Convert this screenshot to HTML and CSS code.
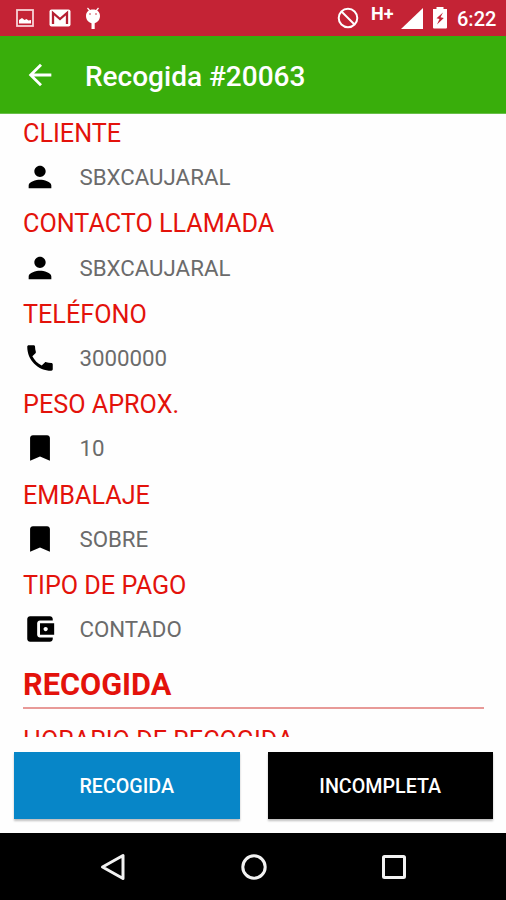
FILE: index.html
```html
<!DOCTYPE html>
<html lang="es">
<head>
<meta charset="utf-8">
<title>Recogida #20063</title>
<link rel="stylesheet" href="styles.css">
</head>
<body>
<div class="status">
  <div class="notifications">
    <svg width="18" height="18" viewBox="0 0 18 18"><rect x="1" y="1" width="16" height="16" fill="none" stroke="#f7d3d6" stroke-width="1.800"/><path d="M3 14.500V11L6 9l2.500 2 2-1 2 1.500L15 11v3.500z" fill="#fff"/></svg>
    <svg class="mail" width="22" height="18" viewBox="0 0 22 18"><rect x=".5" y=".5" width="21" height="17" rx="2" fill="#fff"/><path d="M4 15V4l7 6 7-6v11" fill="none" stroke="#b51f31" stroke-width="2.300"/></svg>
    <svg class="bug" width="16" height="23" viewBox="0 0 16 23"><path d="M2.500 1 5 4M13.500 1 11 4" stroke="#fff" stroke-width="1.200"/><path d="M8 2.500c4.300 0 7 2.500 7 6.500 0 3.500-2.500 6.500-5.300 7.200V22H6.500v-5.800C3.500 15.500 1 12.500 1 9c0-4 2.700-6.500 7-6.500z" fill="#fff"/><circle cx="5" cy="7" r=".8" fill="#c42335"/><circle cx="11" cy="7" r=".8" fill="#c42335"/></svg>
  </div>
  <div class="system">
    <svg class="blocked" width="22" height="22" viewBox="0 0 22 22" fill="none" stroke="#fff" stroke-width="2"><circle cx="11" cy="11" r="9.300"/><path d="m4.500 4.500 13 13"/></svg>
    <span class="network">H+</span>
    <svg class="signal" width="22" height="21" viewBox="0 0 22 21"><path d="M22 0v21H0z" fill="#fff"/></svg>
    <svg class="battery" width="14" height="22" viewBox="0 0 14 22"><path d="M3.500 0h7v2H14v18.500q0 1-1 1H1q-1 0-1-1V2h3.500z" fill="#fff"/><path d="M10 5.500 3.500 11.300l3 .7L4 17.500l6.800-6.500-3.300-.7z" fill="#c42335"/></svg>
    <span class="clock">6:22</span>
  </div>
</div>
<header class="appbar">
  <svg class="back" width="34" height="34" viewBox="0 0 24 24"><path d="M20 11H7.830l5.590-5.590L12 4l-8 8 8 8 1.410-1.410L7.830 13H20v-2z" fill="#fff"/></svg>
  <h1 class="title">Recogida #20063</h1>
</header>
<main class="details">
  <h2 class="label">CLIENTE</h2>
  <div class="row"><svg class="icon" viewBox="0 0 24 24"><path d="M12 12c2.210 0 4-1.790 4-4s-1.790-4-4-4-4 1.790-4 4 1.790 4 4 4zm0 2c-2.670 0-8 1.340-8 4v2h16v-2c0-2.660-5.330-4-8-4z"/></svg><span class="value">SBXCAUJARAL</span></div>
  <h2 class="label">CONTACTO LLAMADA</h2>
  <div class="row"><svg class="icon" viewBox="0 0 24 24"><path d="M12 12c2.210 0 4-1.790 4-4s-1.790-4-4-4-4 1.790-4 4 1.790 4 4 4zm0 2c-2.670 0-8 1.340-8 4v2h16v-2c0-2.660-5.330-4-8-4z"/></svg><span class="value">SBXCAUJARAL</span></div>
  <h2 class="label">TELÉFONO</h2>
  <div class="row"><svg class="icon" viewBox="0 0 24 24"><path d="M6.620 10.790c1.440 2.830 3.760 5.140 6.590 6.590l2.200-2.200c.27-.27.67-.36 1.020-.24 1.120.37 2.330.57 3.570.57.55 0 1 .45 1 1V20c0 .55-.45 1-1 1-9.390 0-17-7.610-17-17 0-.55.45-1 1-1h3.500c.55 0 1 .45 1 1 0 1.250.2 2.450.57 3.570.11.35.03.74-.25 1.020l-2.200 2.200z"/></svg><span class="value">3000000</span></div>
  <h2 class="label">PESO APROX.</h2>
  <div class="row"><svg class="icon" viewBox="0 0 24 24"><path d="M17 3H7c-1.100 0-2 .9-2 2v16l7-3 7 3V5c0-1.100-.9-2-2-2z"/></svg><span class="value">10</span></div>
  <h2 class="label">EMBALAJE</h2>
  <div class="row"><svg class="icon" viewBox="0 0 24 24"><path d="M17 3H7c-1.100 0-2 .9-2 2v16l7-3 7 3V5c0-1.100-.9-2-2-2z"/></svg><span class="value">SOBRE</span></div>
  <h2 class="label">TIPO DE PAGO</h2>
  <div class="row"><svg class="icon" viewBox="0 0 24 24"><path d="M21 18v1c0 1.100-.9 2-2 2H5c-1.110 0-2-.9-2-2V5c0-1.100.89-2 2-2h14c1.100 0 2 .9 2 2v1h-9c-1.110 0-2 .9-2 2v8c0 1.100.89 2 2 2h9zm-9-2h10V8H12v8zm4-2.500c-.83 0-1.500-.67-1.500-1.500s.67-1.500 1.500-1.500 1.500.67 1.500 1.500-.67 1.500-1.500 1.500z"/></svg><span class="value">CONTADO</span></div>
  <h2 class="section">RECOGIDA</h2>
  <h2 class="label">HORARIO DE RECOGIDA</h2>
</main>
<div class="actions">
  <button class="button primary">RECOGIDA</button>
  <button class="button dark">INCOMPLETA</button>
</div>
<nav class="navbar">
  <svg width="28" height="28" viewBox="0 0 28 28"><path d="M3.500 14 24 2.500v23z"/></svg>
  <svg width="28" height="28" viewBox="0 0 28 28"><circle cx="14" cy="14" r="11.200"/></svg>
  <svg width="28" height="28" viewBox="0 0 28 28"><rect x="3.500" y="3.500" width="21" height="21" rx="1"/></svg>
</nav>
</body>
</html>
```
FILE: styles.css
```css
* { box-sizing: border-box; }
body {
  margin: 0;
  width: 506px;
  height: 900px;
  overflow: hidden;
  display: flex;
  flex-direction: column;
  background: #fefefe;
  font-family: Roboto, "Liberation Sans", sans-serif;
}
svg { display: block; flex: none; }
h1, h2 { margin: 0; }
.status {
  flex: none;
  height: 36px;
  padding: 0 10px 0 16px;
  display: flex;
  justify-content: space-between;
  align-items: center;
  background: #c42335;
  color: #fff;
}
.notifications, .system { display: flex; align-items: center; }
.mail { margin-left: 15px; }
.bug { margin-left: 14px; }
.network {
  margin: 0 7px 9px 12px;
  width: 23px;
  font-size: 18px;
  line-height: 20px;
  font-weight: 700;
}
.battery { margin: 0 10px 0 10px; }
.clock { font-size: 20px; font-weight: 500; width: 39px; line-height: 36px; padding-top: 2px; }
.appbar {
  flex: none;
  height: 78px;
  padding-left: 23px;
  display: flex;
  align-items: center;
  background: #39ae0b;
  border-bottom: 1px solid #69bf49;
}
.title {
  margin: 4px 0 0 28px;
  color: #fff;
  font-size: 28px;
  line-height: 34px;
  font-weight: 500;
}
.details { height: 623px; padding: 5px 22px 0 23px; overflow: hidden; }
.label {
  color: #e3120b;
  font-size: 25.2px;
  line-height: 30px;
  height: 29px;
  font-weight: 400;
  white-space: nowrap;
}
.row { display: flex; align-items: center; height: 58.4px; margin-bottom: 3px; }
.icon { width: 34px; height: 34px; fill: #000; }
.value { margin-left: 22.400px; color: #6b6b6b; font-size: 22.3px; line-height: 30px; }
.section {
  height: 48px;
  margin-bottom: 17px;
  padding-top: 6px;
  border-bottom: 2px solid #e89a98;
  color: #e3120b;
  font-size: 30.7px;
  line-height: 36px;
  font-weight: 700;
}
.actions { height: 96px; flex: none; padding: 15px 13px 0 14px; display: flex; gap: 28px; }
.button {
  flex: 1;
  height: 67px;
  padding: 2px 0 0;
  border: 0;
  color: #fff;
  font: 500 19.7px/24px Roboto, "Liberation Sans", sans-serif;
  box-shadow: 0 2px 2px rgba(0, 0, 0, .25);
}
.primary { background: #0786c8; }
.dark { background: #000; }
.navbar {
  flex: none;
  height: 67px;
  padding: 0 98px 0 99px;
  display: flex;
  justify-content: space-between;
  align-items: center;
  background: #000;
}
.navbar svg { fill: none; stroke: #f2f2f2; stroke-width: 3; stroke-linejoin: round; }
```
